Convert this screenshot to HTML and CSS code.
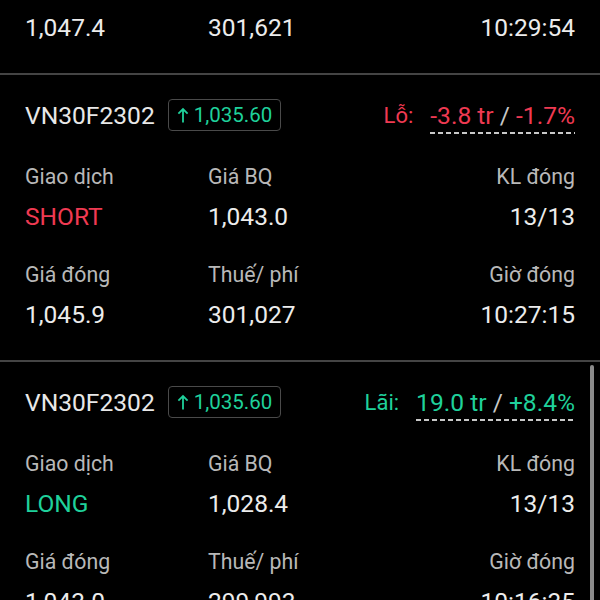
FILE: index.html
```html
<!DOCTYPE html>
<html lang="vi">
<head>
<meta charset="UTF-8" />
<meta name="viewport" content="width=device-width, initial-scale=1" />
<title>Vị thế đã đóng</title>
<link rel="stylesheet" href="styles.css">
</head>
<body>
  <div class="list">
    <!-- phần cuối của vị thế trước (đã cuộn) -->
    <div class="tail">
      <div class="row values">
        <span>1,047.4</span>
        <span>301,621</span>
        <span class="right">10:29:54</span>
      </div>
    </div>

    <div class="card">
      <div class="card-head">
        <div class="symbol">
          <span class="code">VN30F2302</span>
          <span class="badge">
            <svg width="12" height="16" viewBox="0 0 12 16"><path d="M6 15.5V2M1.4 6.6L6 2l4.6 4.6" fill="none" stroke="#1fd19b" stroke-width="1.8"/></svg>
            1,035.60
          </span>
        </div>
        <div class="pnl loss">
          <span class="pnl-label">Lỗ:</span>
          <span class="pnl-value">-3.8 tr <span class="slash">/</span> -1.7%</span>
        </div>
      </div>
      <div class="row labels">
        <span>Giao dịch</span>
        <span>Giá BQ</span>
        <span class="right">KL đóng</span>
      </div>
      <div class="row values">
        <span class="short">SHORT</span>
        <span>1,043.0</span>
        <span class="right">13/13</span>
      </div>
      <div class="row labels gap">
        <span>Giá đóng</span>
        <span>Thuế/ phí</span>
        <span class="right">Giờ đóng</span>
      </div>
      <div class="row values">
        <span>1,045.9</span>
        <span>301,027</span>
        <span class="right">10:27:15</span>
      </div>
    </div>

    <div class="card">
      <div class="card-head">
        <div class="symbol">
          <span class="code">VN30F2302</span>
          <span class="badge">
            <svg width="12" height="16" viewBox="0 0 12 16"><path d="M6 15.5V2M1.4 6.6L6 2l4.6 4.6" fill="none" stroke="#1fd19b" stroke-width="1.8"/></svg>
            1,035.60
          </span>
        </div>
        <div class="pnl gain">
          <span class="pnl-label">Lãi:</span>
          <span class="pnl-value">19.0 tr <span class="slash">/</span> +8.4%</span>
        </div>
      </div>
      <div class="row labels">
        <span>Giao dịch</span>
        <span>Giá BQ</span>
        <span class="right">KL đóng</span>
      </div>
      <div class="row values">
        <span class="long">LONG</span>
        <span>1,028.4</span>
        <span class="right">13/13</span>
      </div>
      <div class="row labels gap">
        <span>Giá đóng</span>
        <span>Thuế/ phí</span>
        <span class="right">Giờ đóng</span>
      </div>
      <div class="row values">
        <span>1,043.0</span>
        <span>299,993</span>
        <span class="right">10:16:35</span>
      </div>
    </div>
  </div>

  <div class="scrollbar"></div>
</body>
</html>
```

FILE: styles.css
```css
html, body {
  height: 100%;
}
body {
  margin: 0;
  background: #000;
  color: #ececec;
  font-family: Roboto, "Noto Sans", sans-serif;
  overflow: hidden;
  position: relative;
}
.list {
  display: flex;
  flex-direction: column;
}
.tail {
  padding: 13px 25px 30px 25px;
}
.card {
  border-top: 2px solid #444;
  padding: 23px 25px 30px 25px;
}
.card-head {
  display: flex;
  align-items: center;
  justify-content: space-between;
  height: 34px;
  margin-bottom: 30px;
}
.symbol {
  display: flex;
  align-items: center;
  gap: 13px;
}
.code {
  font-size: 24.6px;
  color: #e8e8e8;
}
.badge {
  display: flex;
  align-items: center;
  gap: 5px;
  height: 30px;
  padding: 0 8px 0 8px;
  border: 1.5px solid #4a4a4a;
  border-radius: 4px;
  color: #1fd19b;
  font-size: 20.5px;
}
.pnl {
  display: flex;
  align-items: center;
  gap: 17px;
}
.pnl-label {
  font-size: 22px;
}
.pnl-value {
  font-size: 24.6px;
  line-height: 30px;
  padding-bottom: 3px;
  background-image: repeating-linear-gradient(to right, #c8c8c8 0 5px, transparent 5px 8px);
  background-size: 100% 2px;
  background-position: left bottom;
  background-repeat: no-repeat;
  margin-top: 4px;
}
.pnl .slash {
  color: #c8c8c8;
}
.loss {
  color: #ef3a52;
}
.gain {
  color: #1fd19b;
}
.row {
  display: grid;
  grid-template-columns: 183px 1fr auto;
  line-height: 30px;
}
.row .right {
  text-align: right;
}
.labels {
  font-size: 21.3px;
  color: #b8b8b8;
  margin-bottom: 10px;
}
.labels.gap {
  margin-top: 28px;
}
.values {
  font-size: 24.5px;
  color: #ececec;
}
.short {
  color: #ef3a52;
}
.long {
  color: #1fd19b;
}
.scrollbar {
  position: absolute;
  top: 365px;
  right: 6px;
  width: 4px;
  height: 260px;
  background: #8a8a8a;
  border-radius: 2px;
}
```
